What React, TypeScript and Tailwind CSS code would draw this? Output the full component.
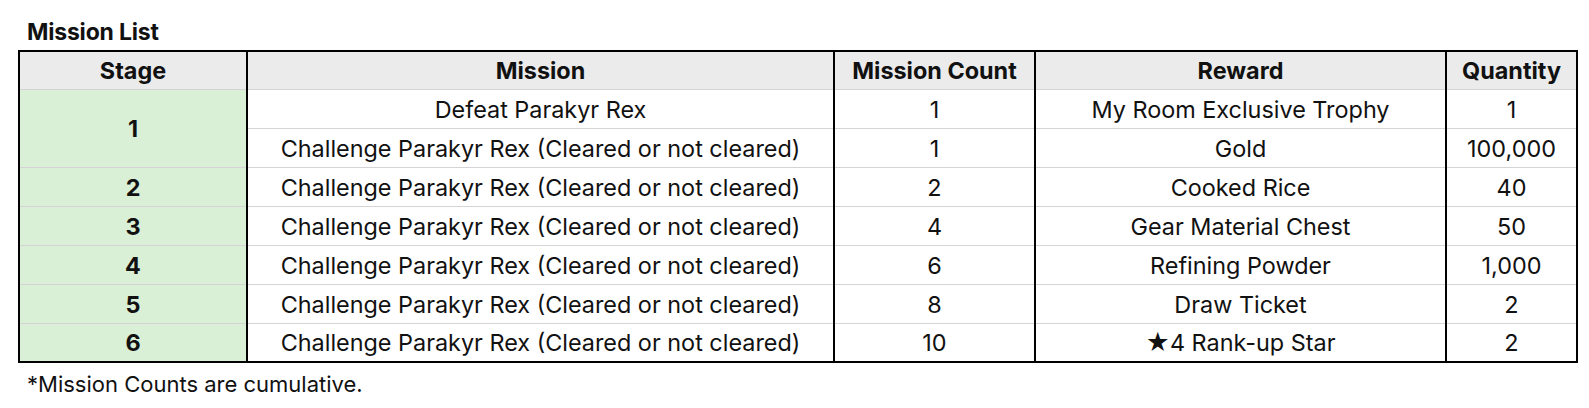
import React from "react";

const rows: { stage?: string; span?: number; mission: string; count: string; reward: string; qty: string }[] = [
  { stage: "1", span: 2, mission: "Defeat Parakyr Rex", count: "1", reward: "My Room Exclusive Trophy", qty: "1" },
  { mission: "Challenge Parakyr Rex (Cleared or not cleared)", count: "1", reward: "Gold", qty: "100,000" },
  { stage: "2", mission: "Challenge Parakyr Rex (Cleared or not cleared)", count: "2", reward: "Cooked Rice", qty: "40" },
  { stage: "3", mission: "Challenge Parakyr Rex (Cleared or not cleared)", count: "4", reward: "Gear Material Chest", qty: "50" },
  { stage: "4", mission: "Challenge Parakyr Rex (Cleared or not cleared)", count: "6", reward: "Refining Powder", qty: "1,000" },
  { stage: "5", mission: "Challenge Parakyr Rex (Cleared or not cleared)", count: "8", reward: "Draw Ticket", qty: "2" },
  { stage: "6", mission: "Challenge Parakyr Rex (Cleared or not cleared)", count: "10", reward: "★4 Rank-up Star", qty: "2" },
];

const cell = "border-x-2 border-x-black border-y border-y-[#d6d3d6] text-center p-0 pt-[2px] align-middle";

export default function App() {
  return (
    <div
      className="w-[1589px] h-[408px] bg-white text-[#111] pl-[18px] pt-[17px]"
      style={{ fontFamily: "Inter, 'Liberation Sans', sans-serif" }}
    >
      <div className="pl-[9px] text-[23px] font-bold leading-[30px] tracking-[-0.2px]">Mission List</div>
      <table className="table-fixed border-collapse border-2 border-black w-[1558px] mt-[3px] text-[23.4px] leading-[26px]">
        <colgroup>
          <col className="w-[228px]" />
          <col className="w-[587px]" />
          <col className="w-[201px]" />
          <col className="w-[411px]" />
          <col className="w-[131px]" />
        </colgroup>
        <thead>
          <tr className="h-[38px] bg-[#ebebeb] font-bold">
            <th className={cell + " border-t-2 border-t-black"}>Stage</th>
            <th className={cell + " border-t-2 border-t-black"}>Mission</th>
            <th className={cell + " border-t-2 border-t-black"}>Mission Count</th>
            <th className={cell + " border-t-2 border-t-black"}>Reward</th>
            <th className={cell + " border-t-2 border-t-black"}>Quantity</th>
          </tr>
        </thead>
        <tbody>
          {rows.map((r, i) => (
            <tr key={i} className="h-[39px]">
              {r.stage !== undefined && (
                <td rowSpan={r.span ?? 1} className={cell + " bg-[#d9efd6] font-bold"}>
                  {r.stage}
                </td>
              )}
              <td className={cell}>{r.mission}</td>
              <td className={cell}>{r.count}</td>
              <td className={cell}>{r.reward}</td>
              <td className={cell}>{r.qty}</td>
            </tr>
          ))}
        </tbody>
      </table>
      <div className="pl-[9px] mt-[6px] text-[22px] leading-[30px]">*Mission Counts are cumulative.</div>
    </div>
  );
}
